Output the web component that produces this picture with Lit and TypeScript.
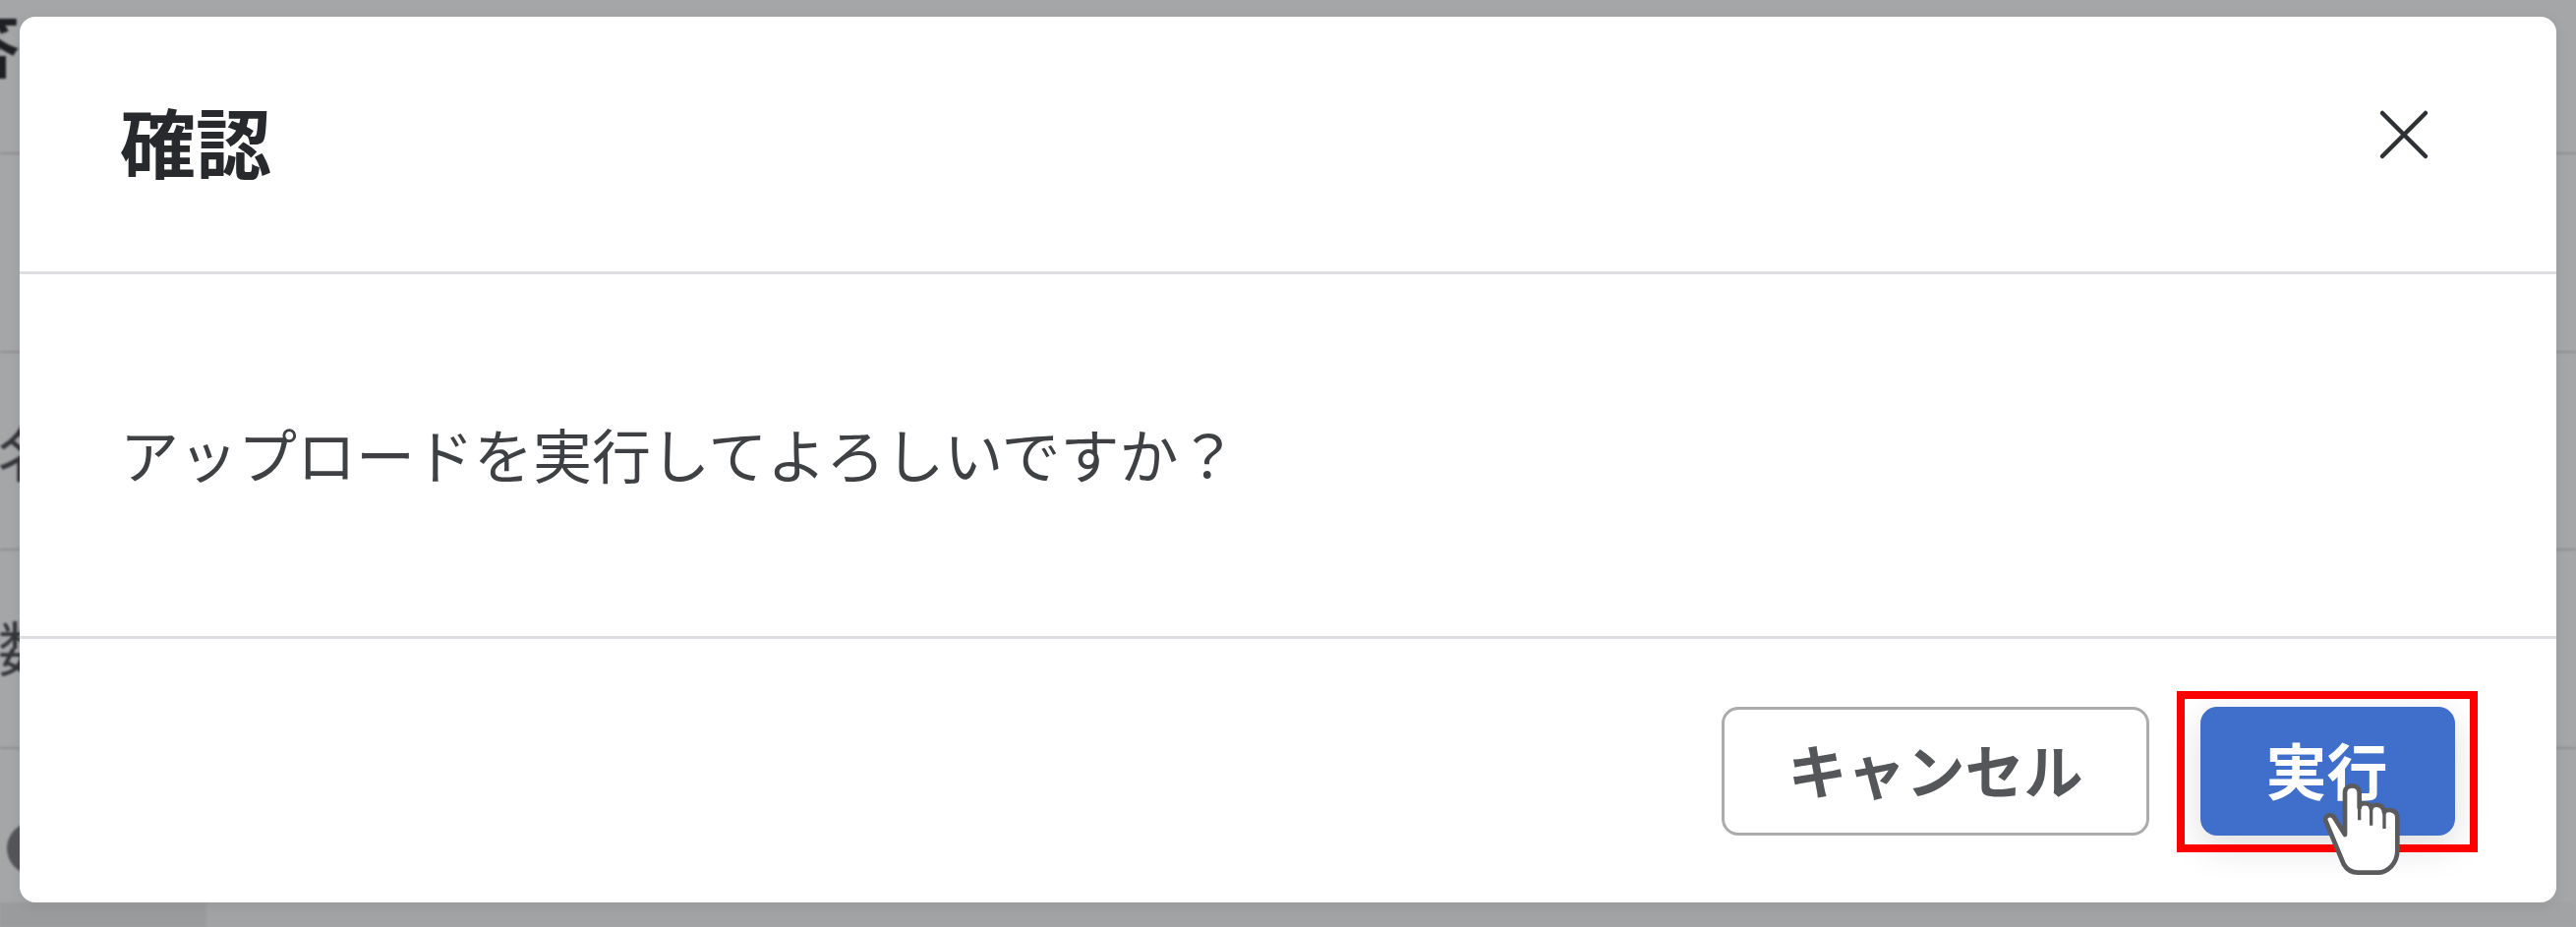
import { LitElement, html, css } from "lit";
import { customElement } from "lit/decorators.js";

@customElement("app-root")
export class AppRoot extends LitElement {
  static styles = css`
    :host {
      display: block;
      position: relative;
      width: 2620px;
      height: 943px;
      overflow: hidden;
      background: #a5a6a8;
      font-family: "Noto Sans CJK JP", "Noto Sans", sans-serif;
      color: #2c2d30;
    }
    .page { display: flex; flex-direction: column; height: 943px; filter: blur(0.8px); }
    .row {
      display: flex;
      align-items: center;
      flex: none;
      height: 200px;
      border-bottom: 2px solid #8f9092;
      font-size: 60px;
      line-height: 1;
      color: #35363a;
      white-space: nowrap;
    }
    .row span { margin: 0 0 0 -2px; }
    .row .low { margin-bottom: 6px; }
    .head {
      height: 155px;
      align-items: flex-start;
      font-size: 70px;
      font-weight: 700;
      color: #1f2023;
    }
    .head span { margin: 9px 0 0 -120px; }
    .tall { height: 200px; }
    .short { height: 199px; }
    .last { flex: 1; height: auto; border: 0; align-items: flex-start; }
    .dot {
      width: 54px;
      height: 54px;
      border-radius: 50%;
      background: #55565a;
      margin: 74px 0 0 7px;
    }
    .strip { display: flex; flex: none; height: 25px; }
    .strip i { width: 210px; background: #9a9b9d; }
    .strip b { flex: 1; background: #a2a3a5; }
    .modal {
      position: absolute;
      left: 20px;
      top: 17px;
      width: 2580px;
      height: 901px;
      background: #fff;
      border-radius: 16px;
      display: flex;
      flex-direction: column;
      box-shadow: 0 3px 14px rgba(0, 0, 0, 0.07);
    }
    .header {
      height: 259px;
      flex: none;
      border-bottom: 3px solid #dddee1;
      display: flex;
      align-items: center;
      justify-content: space-between;
      padding: 0 132px 0 102px;
    }
    .title { font-size: 77px; font-weight: 700; line-height: 1; margin-bottom: 9px; color: #27292c; filter: blur(0.7px); }
    .close { display: block; width: 52px; height: 52px; margin: 0 -3px 20px 0; filter: blur(0.5px); }
    .close path { stroke: #2f3033; stroke-width: 4.5; stroke-linecap: round; fill: none; }
    .body {
      flex: none;
      display: flex;
      align-items: center;
      padding: 0 0 4px 102px;
      box-sizing: border-box;
      border-bottom: 3px solid #dddee1;
      height: 371px;
    }
    .msg { font-size: 60px; line-height: 1; color: #3f4043; filter: blur(0.7px); white-space: nowrap; }
    .footer {
      flex: 1;
      display: flex;
      align-items: center;
      justify-content: flex-end;
      gap: 52px;
      padding-right: 103px;
    }
    .btn {
      position: relative;
      height: 131px;
      box-sizing: border-box;
      display: flex;
      align-items: center;
      justify-content: center;
      font-size: 60px;
      font-weight: 700;
      line-height: 1;
      border-radius: 17px;
    }
    .btn span { filter: blur(0.7px); margin-bottom: 5px; }
    .cancel { width: 435px; border: 3px solid #ababad; background: #fff; color: #55565a; }
    .run { width: 259px; background: #3f6ecb; color: #fff; font-size: 62px; box-shadow: 0 12px 36px rgba(0, 0, 0, 0.13); }
    .run span { margin-right: 2px; }
    .mark {
      position: absolute;
      left: -24px;
      right: -23px;
      top: -16px;
      bottom: -17px;
      border: 8px solid #ff0000;
    }
    .hand { position: absolute; left: 123px; top: 78px; width: 84px; height: 96px; }
    .hand path { stroke: #5b5b5d; stroke-width: 14; fill: #fff; stroke-linejoin: round; stroke-linecap: round; }
    .hand .sep { fill: none; stroke-width: 10; stroke-linecap: butt; }
  `;

  render() {
    return html`
      <div class="page">
        <div class="row head"><span>回答</span></div>
        <div class="row tall"></div>
        <div class="row short"><span>名前</span></div>
        <div class="row tall"><span class="low">数量</span></div>
        <div class="row last"><div class="dot"></div></div>
        <div class="strip"><i></i><b></b></div>
      </div>
      <section class="modal">
        <header class="header">
          <div class="title">確認</div>
          <svg class="close" viewBox="0 0 52 52" aria-label="閉じる">
            <path d="M4 4 L48 48 M48 4 L4 48"></path>
          </svg>
        </header>
        <div class="body"><div class="msg">アップロードを実行してよろしいですか？</div></div>
        <footer class="footer">
          <div class="btn cancel"><span>キャンセル</span></div>
          <div class="btn run">
            <span>実行</span>
            <div class="mark"></div>
            <svg class="hand" viewBox="0 0 252 288">
              <path d="M12 112 C4 100 22 84 36 98 L70 152 L70 24 C70 -4 114 -4 114 24 L114 70 C116 52 148 52 150 72 C152 56 188 56 190 84 C194 72 230 74 230 100 L230 200 C230 240 200 268 170 268 L110 268 C90 268 74 256 66 242 Z" transform="translate(2 4)"></path>
              <path class="sep" d="M116 74 L116 112 M152 78 L152 128 M192 90 L192 138"></path>
            </svg>
          </div>
        </footer>
      </section>
    `;
  }
}
